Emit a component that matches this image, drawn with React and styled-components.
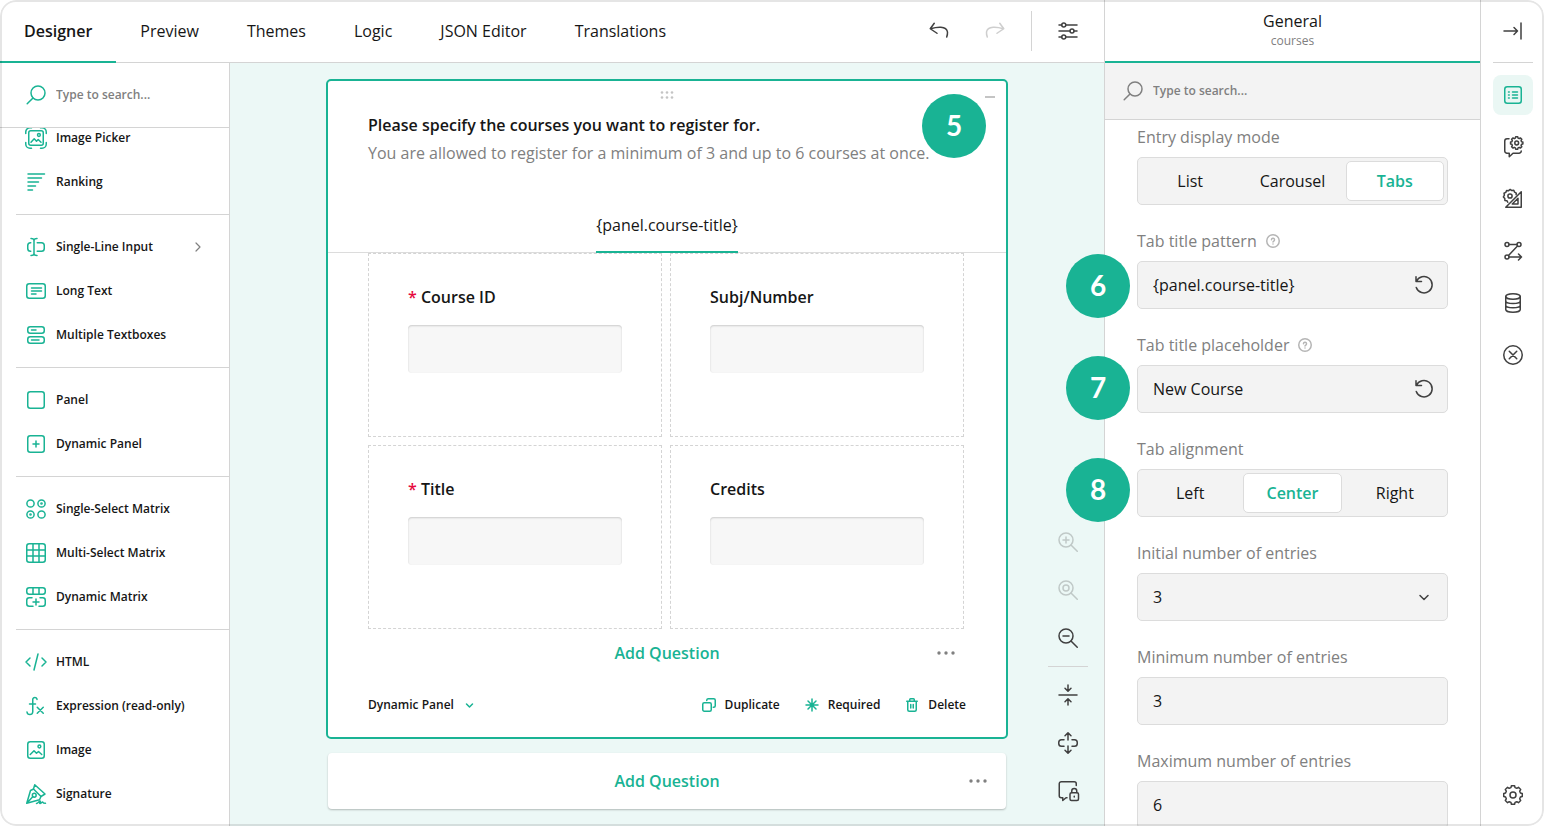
import React, { useState } from "react";
import styled, { createGlobalStyle, css } from "styled-components";

const color = {
  accent: "#19b394",
  accentSoft: "#eaf7f4",
  canvas: "#ecf8f6",
  text: "#161616",
  muted: "#808080",
  icon: "#404040",
  line: "#d4d4d4",
  field: "#f3f3f3",
  fieldLine: "#dcdcdc",
  danger: "#e60a3e",
};

const GlobalStyle = createGlobalStyle`
  *, *::before, *::after { box-sizing: border-box; }
  body {
    margin: 0;
    background: #fff;
    color: ${color.text};
    font-family: "Open Sans", "Noto Sans", sans-serif;
    font-size: 16px;
    line-height: 24px;
  }
  button, input, select { font: inherit; color: inherit; }
  button { background: none; border: 0; padding: 0; cursor: pointer; }
  svg { display: block; flex: none; }
`;

/* ---------- icons ---------- */

const Svg = styled.svg.attrs({
  fill: "none",
  stroke: "currentColor",
  strokeLinecap: "round",
  strokeLinejoin: "round",
  "aria-hidden": true,
})`
  width: ${(p) => p.$size || 24}px;
  height: ${(p) => p.$size || 24}px;
  stroke-width: 1.5;
`;

function gear(cx, cy, outer, inner) {
  const points = [];
  for (let i = 0; i < 8; i += 1) {
    const mid = (i * Math.PI) / 4;
    [
      [-0.27, inner],
      [-0.17, outer],
      [0.17, outer],
      [0.27, inner],
    ].forEach(([offset, radius]) => {
      const a = mid + offset;
      points.push(`${(cx + radius * Math.sin(a)).toFixed(2)} ${(cy - radius * Math.cos(a)).toFixed(2)}`);
    });
  }
  return `M${points.join("L")}Z`;
}

const shapes = {
  search: <><circle cx="14" cy="10" r="7" /><path d="M9 15 3.2 20.8" /></>,
  imagePicker: (
    <>
      <rect x="4.75" y="4.75" width="14.5" height="14.5" rx="2" />
      <circle cx="14.9" cy="9" r="1.4" />
      <path d="M7 16.2l3.2-3.4 2.3 2.4 1.7-1.7 2.8 2.7" />
      <path d="M1.75 7.5V6A4.25 4.25 0 0 1 6 1.75h1.5M16.5 1.75H18A4.25 4.25 0 0 1 22.25 6v1.5M22.25 16.5V18A4.25 4.25 0 0 1 18 22.25h-1.5M7.5 22.25H6A4.25 4.25 0 0 1 1.75 18v-1.5" />
    </>
  ),
  ranking: <path d="M4 4h16.5M4 8h13.5M4 12h10.5M4 16h7.5M4 20h4.5" />,
  singleLine: (
    <>
      <path d="M10 5v14M7 3.5c1.8 0 3 .5 3 2 0-1.5 1.2-2 3-2M7 20.5c1.8 0 3-.5 3-2 0 1.5 1.2 2 3 2" />
      <path d="M6.75 7.75H6.5a2.75 2.75 0 0 0-2.75 2.75v3a2.75 2.75 0 0 0 2.75 2.75h.25M13.25 7.75h4.25a2.75 2.75 0 0 1 2.75 2.75v3a2.75 2.75 0 0 1-2.75 2.75h-4.25" />
    </>
  ),
  longText: <><rect x="2.75" y="4.75" width="18.5" height="14.5" rx="2.5" /><path d="M7.5 9h10M7.5 12h10M7.5 15h4.5" /></>,
  multiText: <><rect x="3.75" y="3.75" width="16.5" height="6.5" rx="2.5" /><rect x="3.75" y="13.75" width="16.5" height="6.5" rx="2.5" /><path d="M7.5 7h4.5M7.5 17h7.5" /></>,
  panel: <rect x="3.75" y="3.75" width="16.5" height="16.5" rx="2.5" />,
  dynamicPanel: <><rect x="3.75" y="3.75" width="16.5" height="16.5" rx="2.5" /><path d="M12 9v6M9 12h6" /></>,
  singleMatrix: (
    <>
      <circle cx="6.5" cy="6.5" r="3.6" /><circle cx="17.5" cy="6.5" r="3.6" />
      <circle cx="6.5" cy="17.5" r="3.6" /><circle cx="17.5" cy="17.5" r="3.6" />
      <circle cx="17.5" cy="6.5" r=".6" /><circle cx="6.5" cy="17.5" r=".6" />
    </>
  ),
  multiMatrix: <><rect x="2.75" y="2.75" width="18.5" height="18.5" rx="2.5" /><path d="M9 3v18M15 3v18M3 9h18M3 15h18" /></>,
  dynamicMatrix: (
    <>
      <rect x="2.75" y="2.75" width="18.5" height="6.5" rx="2.5" />
      <path d="M9 3v6M15 3v6" />
      <path d="M8 12.75H5.25a2.5 2.5 0 0 0-2.5 2.5v3.5a2.5 2.5 0 0 0 2.5 2.5H9M16 12.75h2.75a2.5 2.5 0 0 1 2.5 2.5v3.5a2.5 2.5 0 0 1-2.5 2.5H15M12 14v6M9 17h6" />
    </>
  ),
  html: <path d="M6 8l-4 4 4 4M18 8l4 4-4 4M14 4l-4 16" />,
  expression: <path d="M13 5.5V5a2.25 2.25 0 0 0-4.25 0v13a2.9 2.9 0 0 1-5.75 0M5.5 10h6M13.25 13.25l6 6M19.25 13.25l-6 6" />,
  image: <><rect x="3.75" y="3.75" width="16.5" height="16.5" rx="2.5" /><circle cx="15.4" cy="8.5" r="1.4" /><path d="M6.25 16.5l3.75-3.75 2.5 2.5 2-1.75 3.25 3" /></>,
  signature: (
    <>
      <path d="M2.75 21.25 6.5 8.5l3-1.5 7.5 7.5-1.5 3.25zM9.5 7l1.25-4.25L21 12l-4 2.5M3 21l5.75-6.25" />
      <circle cx="10.25" cy="13.25" r="1.9" />
      <path d="M12.5 21.5c1.5 0 3-3 3.75-2.5s-1.25 2.25-.25 2.5 2-2 2.75-1.5-.5 1.25 2.75 1.25" />
    </>
  ),
  undo: <path d="M7.25 4.25 3.25 9.75l6.75 4.5M3.5 9.75C9.5 8 19.5 6.5 20.5 13c.1 1.8-.2 3.3-.8 5" />,
  redo: <path d="M16.75 4.25l4 5.5-6.75 4.5M20.5 9.75C14.5 8 4.500 6.500 3.500 13c-.1 1.800.2 3.300.8 5" />,
  sliders: (
    <>
      <path d="M3 6h2.75M9.75 6h11.25M3 12h11M18 12h3M3 18h2.75M9.75 18h11.25" />
      <circle cx="7.75" cy="6" r="2" /><circle cx="16" cy="12" r="2" /><circle cx="7.75" cy="18" r="2" />
    </>
  ),
  zoomIn: <><circle cx="10" cy="10" r="7" /><path d="M15 15l6.25 6.25M7 10h6M10 7v6" /></>,
  zoomReset: <><circle cx="10" cy="10" r="7" /><circle cx="10" cy="10" r="3" /><path d="M15 15l6.25 6.25" /></>,
  zoomOut: <><circle cx="10" cy="10" r="7" /><path d="M15 15l6.25 6.25M7 10h6" /></>,
  collapseAll: <path d="M3 12h18M12 2v6M9 5.25l3 3 3-3M12 22v-6M9 18.75l3-3 3 3" />,
  expandAll: <path d="M12 2v7M9 4.75l3-3 3 3M12 22v-7M9 19.25l3 3 3-3M8 8.75H5.5a2.75 2.75 0 0 0-2.75 2.75v1a2.75 2.75 0 0 0 2.75 2.75H8M16 8.75h2.5a2.75 2.75 0 0 1 2.75 2.75v1a2.75 2.75 0 0 1-2.75 2.75H16" />,
  lockBubble: (
    <>
      <path d="M20.25 6.5V4.75a2 2 0 0 0-2-2h-13a2 2 0 0 0-2 2v12a2 2 0 0 0 2 2h1.5v2.75L10 18.75h1" />
      <rect x="14" y="13.75" width="8.5" height="7.75" rx="1.5" />
      <path d="M15.75 13.5v-1.5a2.5 2.5 0 0 1 5 0v1.5M18.25 17.25v.75" />
    </>
  ),
  hidePanel: <path d="M3 12h13.5M13 8.5l3.5 3.5-3.5 3.5M20 4v16" />,
  propertyList: <><rect x="3.75" y="3.75" width="16.5" height="16.5" rx="2.5" /><path d="M7.5 9h.75M7.5 12h.75M7.5 15h.75M11.5 9h5M11.5 12h5M11.5 15h5" /></>,
  bubbleGear: (
    <>
      <path d={gear(15.7, 8, 6.25, 5)} /><circle cx="15.7" cy="8" r="1.9" />
      <path d="M8 3.75H6a2.25 2.25 0 0 0-2.25 2.25v10A2.25 2.25 0 0 0 6 18.25h2.25v3.5l3.75-3.5h6a2.25 2.25 0 0 0 2.25-2.25" />
    </>
  ),
  rulerGear: (
    <>
      <path d="M6.75 15.25 5.9 13.7l-2-.2-.1-2L2.4 9.9l1-1.7-.4-2 1.8-.8.8-1.9 2 .2L9.2 2.4l1.6 1.2 2-.3.8 1.9 1.7.9-.2 1.6" />
      <circle cx="9" cy="9" r="2.1" />
      <path d="M20.25 4.75v15.5H4.75zM17 11.25V17h-5.750z" />
    </>
  ),
  flow: (
    <>
      <circle cx="6" cy="5.5" r="2" /><circle cx="18" cy="5.5" r="2" /><circle cx="6" cy="18" r="2" />
      <path d="M8 5.5h8M16.5 7l-9 9.5M8 18h12.5M17.5 15l3 3-3 3" />
    </>
  ),
  database: (
    <>
      <ellipse cx="12" cy="5.5" rx="7.25" ry="2.75" />
      <path d="M4.75 5.5v13c0 1.5 3.2 2.75 7.25 2.75s7.25-1.25 7.25-2.75v-13M4.75 10c0 1.5 3.2 2.5 7.25 2.5s7.25-1 7.25-2.5M4.75 14.25c0 1.5 3.2 2.5 7.25 2.5s7.25-1 7.25-2.5" />
    </>
  ),
  closeCircle: <><circle cx="12" cy="12" r="9.25" /><path d="M8.25 8.25l7.5 7.5M15.75 8.25l-7.5 7.5" /></>,
  settings: <><path d={gear(12, 12, 9.4, 7.7)} /><circle cx="12" cy="12" r="3" /></>,
  reset: <path d="M4 3.75V8.5h5.5M4.4 8.5A8.2 8.2 0 1 1 4.25 14.5" />,
  chevronDown: <path d="M8 10.5l4 4 4-4" />,
};

const smallShapes = {
  chevronRight: <path d="M6 4l4 4-4 4" strokeWidth="1.2" />,
  chevronDown: <path d="M4.5 7l3 3 3-3" />,
  help: <><circle cx="8" cy="8" r="6.25" /><path d="M6.5 6.75a1.5 1.5 0 1 1 2.25 1.3c-.5.3-.75.5-.75 1M8 11v.1" /></>,
  duplicate: <><rect x="1.75" y="5.75" width="8.5" height="8.5" rx="1.5" /><path d="M5.75 3.5V3A1.5 1.5 0 0 1 7.25 1.75h5.5a1.5 1.5 0 0 1 1.5 1.5v5.5a1.5 1.5 0 0 1-1.5 1.5h-.5" /></>,
  required: <><path d="M8 2v12M2 8h12M4 4l8 8M12 4l-8 8" /><circle cx="8" cy="8" r="1.5" fill="currentColor" /></>,
  trash: <path d="M2.75 4.25h10.5M5.75 4V2.5a.75.75 0 0 1 .75-.75h3a.75.75 0 0 1 .75.75V4M3.75 4.5v8.25a1.5 1.5 0 0 0 1.5 1.5h5.5a1.5 1.5 0 0 0 1.5-1.5V4.5M6.75 7.5v3.5M9.25 7.5v3.5" />,
};

const Icon = ({ name }) => <Svg viewBox="0 0 24 24">{shapes[name]}</Svg>;
const SmallIcon = ({ name }) => <Svg viewBox="0 0 16 16" $size={16}>{smallShapes[name]}</Svg>;

/* ---------- shell ---------- */

const Frame = styled.div`
  position: relative;
  display: grid;
  grid-template-columns: minmax(0, 1fr) 376px 64px;
  height: 100vh;
  overflow: hidden;
  border-radius: 16px;
  background: #fff;

  &::after {
    content: "";
    position: absolute;
    inset: 0;
    z-index: 5;
    border: 2px solid rgba(0, 0, 0, 0.1);
    border-radius: 16px;
    pointer-events: none;
  }
`;

const Workspace = styled.main`
  display: grid;
  grid-template-rows: 63px minmax(0, 1fr);
  min-width: 0;
  min-height: 0;
`;

const TopBar = styled.header`
  display: flex;
  justify-content: space-between;
  box-shadow: inset 0 -1px ${color.line};
`;

const TabList = styled.nav`
  display: flex;
`;

const Tab = styled.button`
  padding: 0 24px;
  font-weight: ${(p) => (p.$active ? 600 : 400)};
  border-bottom: 2px solid ${(p) => (p.$active ? color.accent : "transparent")};
`;

const TopTools = styled.div`
  display: flex;
  align-items: center;
  padding: 0 16px 2px 0;
`;

const IconButton = styled.button`
  display: grid;
  place-items: center;
  width: 40px;
  height: 40px;
  flex: none;
  border-radius: 8px;
  color: ${(p) => (p.$active ? color.accent : color.icon)};
  background: ${(p) => (p.$active ? color.accentSoft : "transparent")};

  &:disabled {
    opacity: 0.25;
    cursor: default;
  }
`;

const HistoryTools = styled.div`
  display: flex;
  gap: 16px;
  padding-right: 16px;
  margin-right: 16px;
  border-right: 1px solid ${color.line};
`;

const Body = styled.div`
  display: grid;
  grid-template-columns: 230px minmax(0, 1fr);
  min-height: 0;
`;

/* ---------- toolbox ---------- */

const Toolbox = styled.aside`
  display: grid;
  grid-template-rows: 65px minmax(0, 1fr);
  min-height: 0;
  border-right: 1px solid ${color.line};
`;

const SearchBar = styled.label`
  display: flex;
  align-items: center;
  gap: 8px;
  min-width: 0;
  padding: ${(p) => (p.$panel ? "0 16px" : "0 24px")};
  border-bottom: 1px solid ${color.line};
  background: ${(p) => (p.$panel ? color.field : "#fff")};
  color: ${(p) => (p.$panel ? color.muted : color.accent)};
`;

const SearchInput = styled.input.attrs({ type: "search", placeholder: "Type to search...", "aria-label": "Type to search" })`
  flex: 1;
  min-width: 0;
  padding: 0;
  border: 0;
  outline: 0;
  background: none;
  font-size: 12px;
  font-weight: 600;
  line-height: 16px;
  color: ${color.text};

  &::placeholder {
    color: ${color.muted};
    opacity: 1;
  }
`;

const ToolScroller = styled.div`
  overflow: hidden;
`;

const ToolGroups = styled.div`
  margin-top: -12px;
`;

const ToolGroup = styled.ul`
  list-style: none;
  margin: 0 0 0 16px;
  padding: 0 0 10px;

  & + & {
    padding-top: 10px;
    border-top: 1px solid ${color.line};
  }
`;

const Tool = styled.button`
  display: flex;
  align-items: center;
  gap: 8px;
  width: 100%;
  height: 44px;
  padding: 0 23px 0 8px;
  font-size: 12px;
  font-weight: 600;
  line-height: 16px;
  text-align: left;

  > svg:first-child {
    color: ${color.accent};
  }
  > svg:last-child {
    color: ${color.muted};
  }
`;

const ToolLabel = styled.span`
  flex: 1;
`;

/* ---------- canvas ---------- */

const Canvas = styled.section`
  display: grid;
  grid-template-columns: minmax(0, 1fr) 72px;
  column-gap: 24px;
  padding-left: 96px;
  min-height: 0;
  background: ${color.canvas};
`;

const Surface = styled.div`
  padding-top: 16px;
`;

const Question = styled.article`
  position: relative;
  border: 2px solid ${color.accent};
  border-radius: 5px;
  background: #fff;
`;

const CardTop = styled.div`
  display: grid;
  grid-template-columns: 1fr auto 1fr;
  align-items: center;
  height: 28px;
  padding: 0 11px;
`;

const Grip = styled.svg`
  grid-column: 2;
  width: 14px;
  height: 8px;
  fill: #c4c4c4;
`;

const Minimize = styled.button`
  justify-self: end;
  width: 10px;
  height: 2px;
  margin-top: 4px;
  background: #c4c4c4;
`;

const CardHead = styled.div`
  padding: 4px 40px 0;
`;

const Title = styled.h2`
  margin: 0 0 4px;
  font-size: 16px;
  font-weight: 600;
`;

const Description = styled.p`
  margin: 0;
  color: ${color.muted};
`;

const PanelTabs = styled.div`
  display: flex;
  justify-content: center;
  margin-top: 48px;
  box-shadow: inset 0 -1px ${color.fieldLine};
`;

const PanelTab = styled.button`
  padding-bottom: 14px;
  border-bottom: 2px solid ${color.accent};
`;

const Cells = styled.div`
  display: grid;
  grid-template-columns: repeat(2, minmax(0, 1fr));
  gap: 8px;
  padding: 0 42px 0 40px;
`;

const Cell = styled.div`
  height: 184px;
  padding: 31px 39px;
  border: 1px dashed ${color.line};
`;

const CellLabel = styled.label`
  display: block;
  margin-bottom: 16px;
  font-weight: 600;
`;

const Asterisk = styled.span`
  color: ${color.danger};
`;

const CellInput = styled.input.attrs({ type: "text" })`
  display: block;
  width: 100%;
  height: 48px;
  padding: 0 16px;
  border: 0;
  border-radius: 4px;
  background: #f7f7f7;
  box-shadow: inset 0 1px 2px rgba(0, 0, 0, 0.18);
`;

const AddRow = styled.div`
  display: grid;
  grid-template-columns: 1fr auto 1fr;
  align-items: center;
  height: ${(p) => (p.$card ? 56 : 48)}px;
  padding: ${(p) => (p.$card ? "0 18px" : "0 50px")};

  ${(p) =>
    p.$card &&
    css`
      margin: 14px 2px 0;
      border-radius: 4px;
      background: #fff;
      box-shadow: 0 1px 2px rgba(0, 0, 0, 0.25);
    `}
`;

const AddButton = styled.button`
  grid-column: 2;
  font-weight: 600;
  color: ${color.accent};
`;

const MoreButton = styled.button`
  justify-self: end;

  svg {
    width: 20px;
    height: 4px;
    fill: ${color.muted};
  }
`;

const CardFooter = styled.div`
  display: flex;
  justify-content: space-between;
  align-items: center;
  height: 60px;
  padding: 0 40px 4px;
`;

const FooterActions = styled.div`
  display: flex;
  gap: 24px;
`;

const FooterButton = styled.button`
  display: flex;
  align-items: center;
  gap: 8px;
  font-size: 12px;
  font-weight: 600;
  line-height: 16px;

  svg {
    color: ${color.accent};
  }
`;

const CanvasTools = styled.div`
  display: flex;
  flex-direction: column;
  justify-content: flex-end;
  align-items: center;
  gap: 8px;
  padding-bottom: 15px;
`;

const Divider = styled.hr`
  width: 40px;
  height: 1px;
  flex: none;
  margin: 0;
  border: 0;
  background: ${color.line};
`;

/* ---------- numbered callouts ---------- */

const Callout = styled.span`
  display: grid;
  place-items: center;
  width: 64px;
  height: 64px;
  padding-bottom: 2px;
  border-radius: 50%;
  background: ${color.accent};
  color: #fff;
  font-family: Lato, sans-serif;
  font-size: 28px;
  font-weight: 700;
  line-height: 32px;
`;

const CardCallout = styled(Callout)`
  position: absolute;
  top: 13px;
  right: 20px;
`;

const PanelCallouts = styled.div`
  position: absolute;
  top: 254px;
  left: -39px;
  z-index: 3;
  display: grid;
  gap: 38px;
`;

/* ---------- property panel ---------- */

const Properties = styled.aside`
  position: relative;
  display: grid;
  grid-template-rows: 63px 57px minmax(0, 1fr);
  min-height: 0;
  border-left: 1px solid ${color.line};
`;

const PropertiesHead = styled.header`
  display: flex;
  flex-direction: column;
  align-items: center;
  padding-top: 9px;
  border-bottom: 2px solid ${color.accent};
`;

const PropertiesTitle = styled.h2`
  margin: 0;
  font-size: 16px;
  font-weight: 400;
`;

const PropertiesSubtitle = styled.span`
  font-size: 12px;
  line-height: 16px;
  color: ${color.muted};
`;

const Fields = styled.div`
  display: flex;
  flex-direction: column;
  gap: 24px;
  padding: 5px 32px 0;
  overflow: hidden;
`;

const Field = styled.div`
  flex: none;
`;

const FieldLabel = styled.label`
  display: flex;
  align-items: center;
  gap: 8px;
  margin-bottom: 8px;
  color: ${color.muted};

  svg {
    color: #b5b5b5;
  }
`;

const box = css`
  height: 48px;
  border: 1px solid ${color.fieldLine};
  border-radius: 5px;
  background: ${color.field};
`;

const Segments = styled.div`
  ${box}
  display: grid;
  grid-template-columns: repeat(3, minmax(0, 1fr));
  gap: 4px;
  padding: 3px;
`;

const Segment = styled.button`
  border: 1px solid ${(p) => (p.$active ? color.fieldLine : "transparent")};
  border-radius: 5px;
  background: ${(p) => (p.$active ? "#fff" : "transparent")};
  color: ${(p) => (p.$active ? color.accent : color.text)};
  font-weight: ${(p) => (p.$active ? 600 : 400)};
`;

const Control = styled.div`
  ${box}
  display: flex;
  align-items: center;
  padding-right: 3px;
`;

const ControlInput = styled.input.attrs({ type: "text" })`
  flex: 1;
  min-width: 0;
  height: 46px;
  padding: 0 15px;
  border: 0;
  outline: 0;
  background: none;
`;

const SelectBox = styled.div`
  ${box}
  display: grid;
  align-items: center;

  > * {
    grid-area: 1 / 1;
  }
  > svg {
    justify-self: end;
    margin-right: 11px;
    color: ${color.icon};
    pointer-events: none;
  }
`;

const Select = styled.select`
  appearance: none;
  width: 100%;
  height: 46px;
  padding: 0 15px;
  border: 0;
  outline: 0;
  background: none;
`;

/* ---------- right rail ---------- */

const Rail = styled.nav`
  display: flex;
  flex-direction: column;
  align-items: center;
  gap: 12px;
  padding: 11px 0;
  border-left: 1px solid ${color.line};

  > :first-child {
    margin-bottom: -1px;
  }
  > :last-child {
    margin-top: auto;
  }
`;

/* ---------- data ---------- */

const tabs = ["Designer", "Preview", "Themes", "Logic", "JSON Editor", "Translations"];

const toolGroups = [
  [["imagePicker", "Image Picker"], ["ranking", "Ranking"]],
  [["singleLine", "Single-Line Input", true], ["longText", "Long Text"], ["multiText", "Multiple Textboxes"]],
  [["panel", "Panel"], ["dynamicPanel", "Dynamic Panel"]],
  [["singleMatrix", "Single-Select Matrix"], ["multiMatrix", "Multi-Select Matrix"], ["dynamicMatrix", "Dynamic Matrix"]],
  [["html", "HTML"], ["expression", "Expression (read-only)"], ["image", "Image"], ["signature", "Signature"]],
];

const cells = [
  { id: "course-id", label: "Course ID", required: true },
  { id: "subj-number", label: "Subj/Number" },
  { id: "title", label: "Title", required: true },
  { id: "credits", label: "Credits" },
];

const railItems = [
  ["propertyList", "General"],
  ["bubbleGear", "Question settings"],
  ["rulerGear", "Layout"],
  ["flow", "Conditions"],
  ["database", "Data"],
  ["closeCircle", "Validation"],
];

const Dots = () => (
  <svg viewBox="0 0 20 4" aria-hidden="true">
    <circle cx="3" cy="2" r="1.7" /><circle cx="10" cy="2" r="1.7" /><circle cx="17" cy="2" r="1.7" />
  </svg>
);

const AddQuestion = ({ card }) => (
  <AddRow $card={card}>
    <AddButton type="button">Add Question</AddButton>
    <MoreButton type="button" aria-label="More question types"><Dots /></MoreButton>
  </AddRow>
);

const SegmentField = ({ label, options, initial }) => {
  const [value, setValue] = useState(initial);
  return (
    <Field>
      <FieldLabel as="div">{label}</FieldLabel>
      <Segments role="group" aria-label={label}>
        {options.map((option) => (
          <Segment key={option} type="button" $active={option === value} aria-pressed={option === value} onClick={() => setValue(option)}>
            {option}
          </Segment>
        ))}
      </Segments>
    </Field>
  );
};

const TextField = ({ id, label, value, help, resettable }) => (
  <Field>
    <FieldLabel htmlFor={id}>
      {label}
      {help && <SmallIcon name="help" />}
    </FieldLabel>
    <Control>
      <ControlInput id={id} defaultValue={value} />
      {resettable && <IconButton type="button" aria-label={`Reset ${label}`}><Icon name="reset" /></IconButton>}
    </Control>
  </Field>
);

export default function App() {
  return (
    <>
      <GlobalStyle />
      <Frame>
        <Workspace>
          <TopBar>
            <TabList>
              {tabs.map((tab, i) => (
                <Tab key={tab} type="button" $active={i === 0}>{tab}</Tab>
              ))}
            </TabList>
            <TopTools>
              <HistoryTools>
                <IconButton type="button" aria-label="Undo"><Icon name="undo" /></IconButton>
                <IconButton type="button" aria-label="Redo" disabled><Icon name="redo" /></IconButton>
              </HistoryTools>
              <IconButton type="button" aria-label="Survey settings"><Icon name="sliders" /></IconButton>
            </TopTools>
          </TopBar>

          <Body>
            <Toolbox>
              <SearchBar>
                <Icon name="search" />
                <SearchInput />
              </SearchBar>
              <ToolScroller>
                <ToolGroups>
                  {toolGroups.map((group) => (
                    <ToolGroup key={group[0][0]}>
                      {group.map(([icon, label, more]) => (
                        <li key={icon}>
                          <Tool type="button">
                            <Icon name={icon} />
                            <ToolLabel>{label}</ToolLabel>
                            {more && <SmallIcon name="chevronRight" />}
                          </Tool>
                        </li>
                      ))}
                    </ToolGroup>
                  ))}
                </ToolGroups>
              </ToolScroller>
            </Toolbox>

            <Canvas>
              <Surface>
                <Question>
                  <CardTop>
                    <Grip viewBox="0 0 14 8" aria-hidden="true">
                      {[2, 7, 12].map((x) => [1.5, 6.5].map((y) => <circle key={`${x}-${y}`} cx={x} cy={y} r="1.3" />))}
                    </Grip>
                    <Minimize type="button" aria-label="Collapse question" />
                  </CardTop>
                  <CardHead>
                    <Title>Please specify the courses you want to register for.</Title>
                    <Description>You are allowed to register for a minimum of 3 and up to 6 courses at once.</Description>
                  </CardHead>
                  <PanelTabs>
                    <PanelTab type="button">{"{panel.course-title}"}</PanelTab>
                  </PanelTabs>
                  <Cells>
                    {cells.map(({ id, label, required }) => (
                      <Cell key={id}>
                        <CellLabel htmlFor={id}>
                          {required && <Asterisk>* </Asterisk>}
                          {label}
                        </CellLabel>
                        <CellInput id={id} />
                      </Cell>
                    ))}
                  </Cells>
                  <AddQuestion />
                  <CardFooter>
                    <FooterButton type="button">Dynamic Panel<SmallIcon name="chevronDown" /></FooterButton>
                    <FooterActions>
                      <FooterButton type="button"><SmallIcon name="duplicate" />Duplicate</FooterButton>
                      <FooterButton type="button"><SmallIcon name="required" />Required</FooterButton>
                      <FooterButton type="button"><SmallIcon name="trash" />Delete</FooterButton>
                    </FooterActions>
                  </CardFooter>
                  <CardCallout>5</CardCallout>
                </Question>
                <AddQuestion card />
              </Surface>

              <CanvasTools>
                <IconButton type="button" aria-label="Zoom in" disabled><Icon name="zoomIn" /></IconButton>
                <IconButton type="button" aria-label="Zoom to 100%" disabled><Icon name="zoomReset" /></IconButton>
                <IconButton type="button" aria-label="Zoom out"><Icon name="zoomOut" /></IconButton>
                <Divider />
                <IconButton type="button" aria-label="Collapse all"><Icon name="collapseAll" /></IconButton>
                <IconButton type="button" aria-label="Expand all"><Icon name="expandAll" /></IconButton>
                <IconButton type="button" aria-label="Lock questions"><Icon name="lockBubble" /></IconButton>
              </CanvasTools>
            </Canvas>
          </Body>
        </Workspace>

        <Properties>
          <PropertiesHead>
            <PropertiesTitle>General</PropertiesTitle>
            <PropertiesSubtitle>courses</PropertiesSubtitle>
          </PropertiesHead>
          <SearchBar $panel>
            <Icon name="search" />
            <SearchInput />
          </SearchBar>
          <Fields>
            <SegmentField label="Entry display mode" options={["List", "Carousel", "Tabs"]} initial="Tabs" />
            <TextField id="tab-title-pattern" label="Tab title pattern" value="{panel.course-title}" help resettable />
            <TextField id="tab-title-placeholder" label="Tab title placeholder" value="New Course" help resettable />
            <SegmentField label="Tab alignment" options={["Left", "Center", "Right"]} initial="Center" />
            <Field>
              <FieldLabel htmlFor="initial-entries">Initial number of entries</FieldLabel>
              <SelectBox>
                <Select id="initial-entries" defaultValue="3">
                  {["3", "4", "5", "6"].map((n) => <option key={n}>{n}</option>)}
                </Select>
                <Icon name="chevronDown" />
              </SelectBox>
            </Field>
            <TextField id="min-entries" label="Minimum number of entries" value="3" />
            <TextField id="max-entries" label="Maximum number of entries" value="6" />
          </Fields>
          <PanelCallouts>
            <Callout>6</Callout>
            <Callout>7</Callout>
            <Callout>8</Callout>
          </PanelCallouts>
        </Properties>

        <Rail>
          <IconButton type="button" aria-label="Hide panel"><Icon name="hidePanel" /></IconButton>
          <Divider />
          {railItems.map(([icon, label], i) => (
            <IconButton key={icon} type="button" aria-label={label} $active={i === 0}><Icon name={icon} /></IconButton>
          ))}
          <IconButton type="button" aria-label="Creator settings"><Icon name="settings" /></IconButton>
        </Rail>
      </Frame>
    </>
  );
}
